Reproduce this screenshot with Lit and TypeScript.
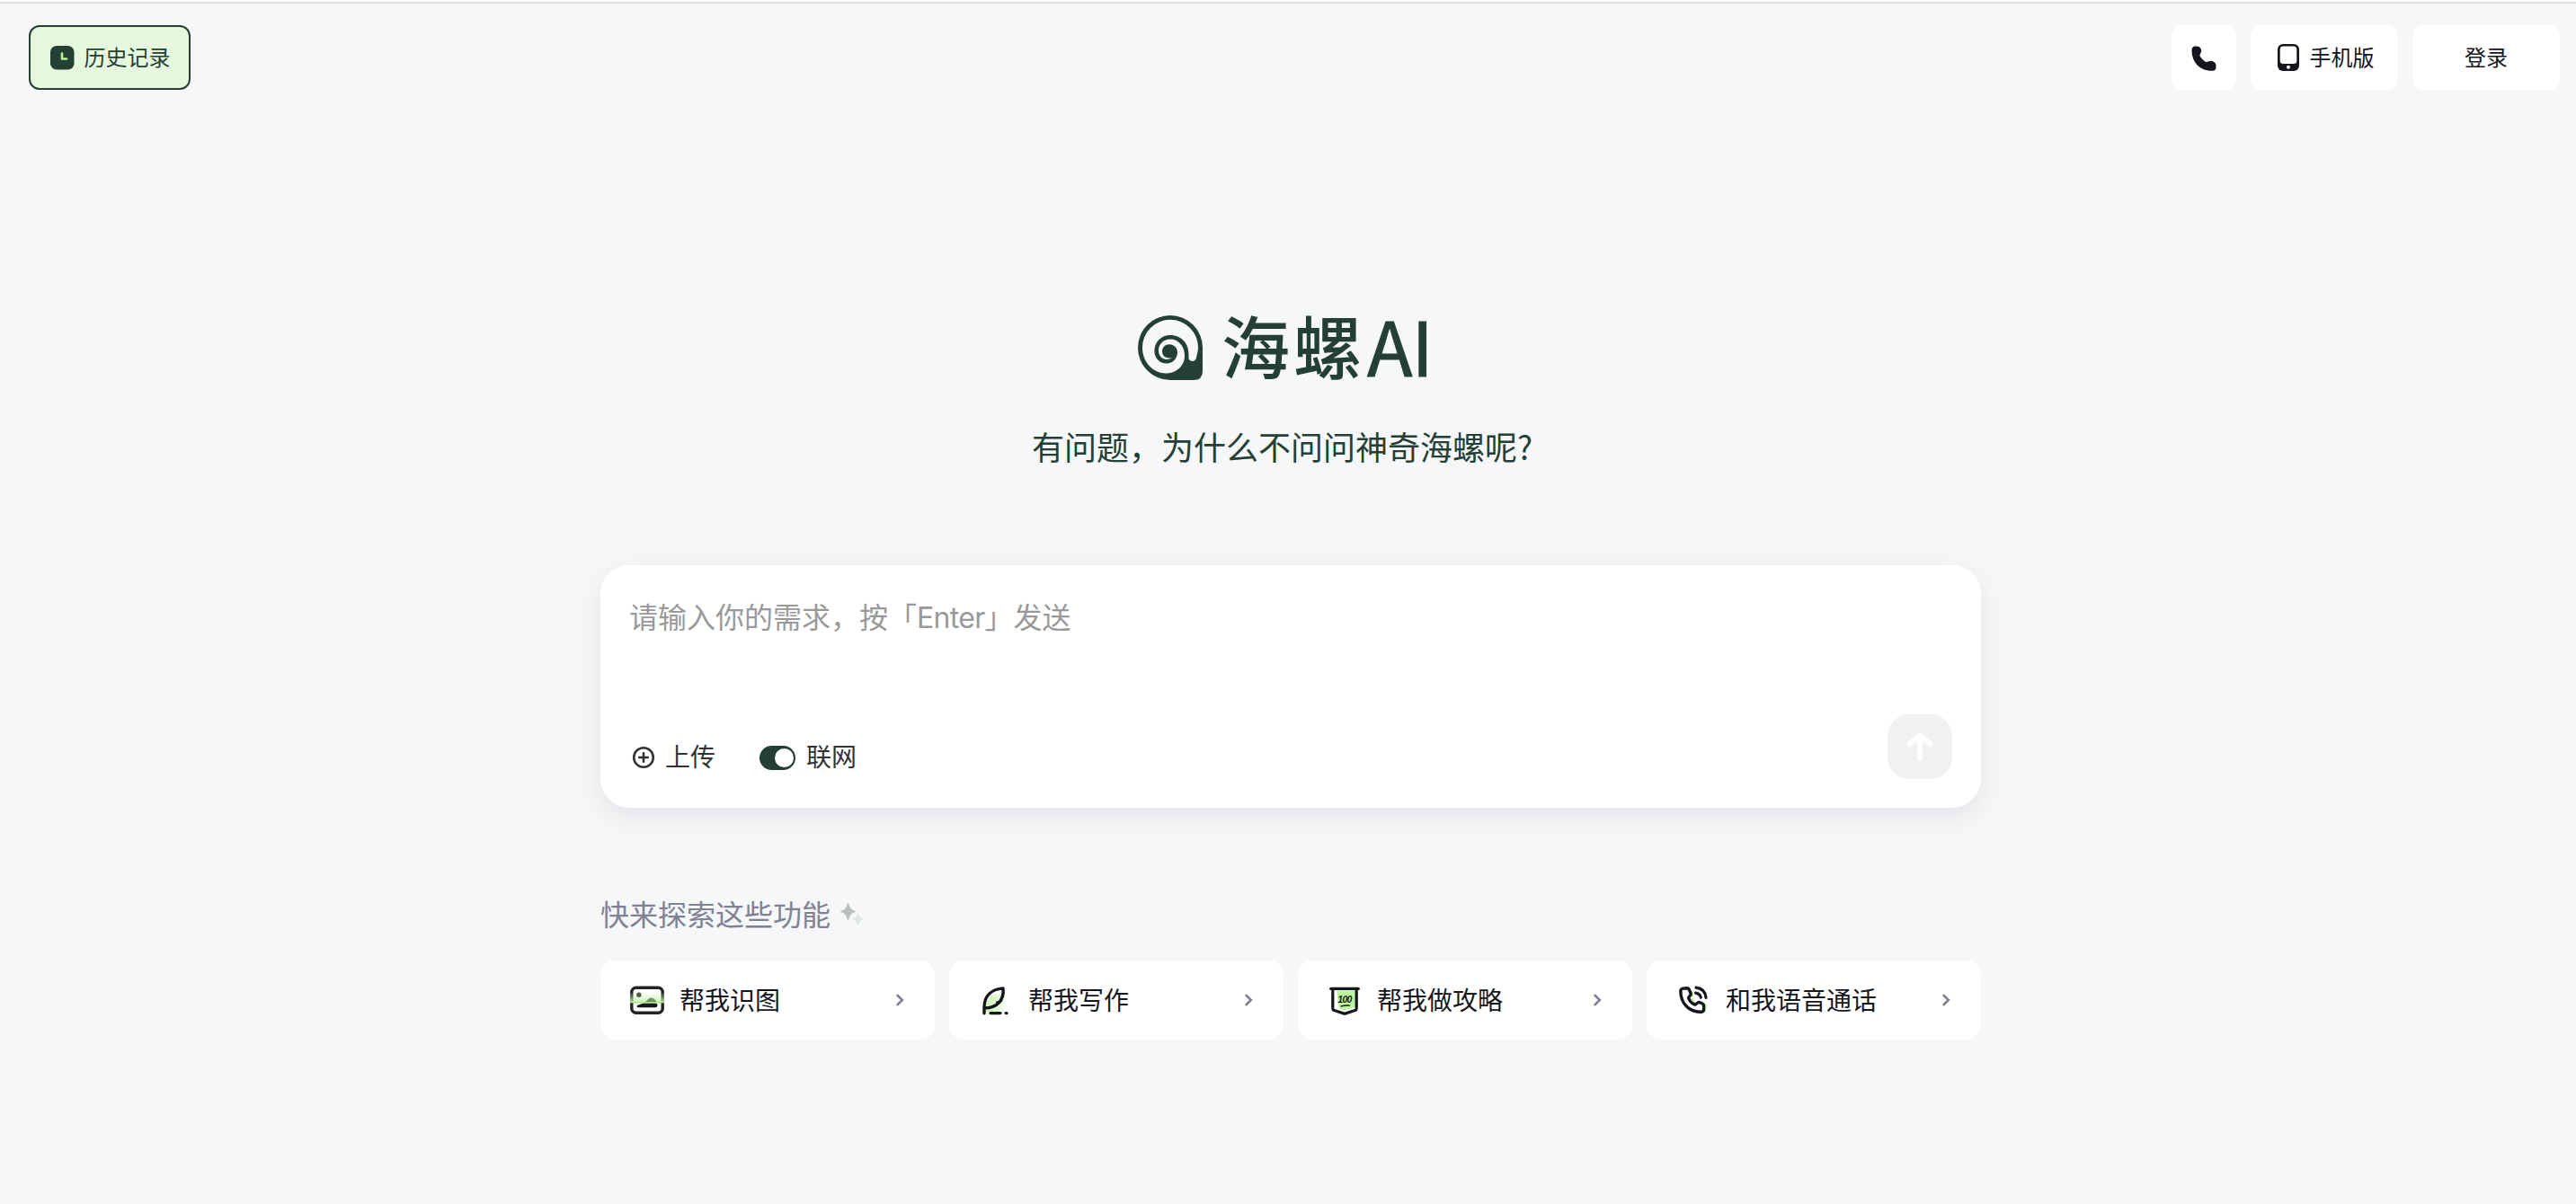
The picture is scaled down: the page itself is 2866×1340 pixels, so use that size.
import { LitElement, html, css, svg } from 'lit';
import { customElement, property } from 'lit/decorators.js';

const icons = {
  image: svg`
    <defs>
      <linearGradient id="scan" x1="0" y1="0" x2="0" y2="1">
        <stop offset="0" stop-color="#c4f4a4" stop-opacity="0"></stop>
        <stop offset="1" stop-color="#c4f4a4" stop-opacity="0.9"></stop>
      </linearGradient>
    </defs>
    <rect x="2.8" y="6.2" width="34.4" height="28" rx="5" fill="none" stroke="#222426" stroke-width="3.4"></rect>
    <rect x="1" y="11" width="38" height="12" fill="url(#scan)"></rect>
    <circle cx="10.8" cy="14.2" r="2.7" fill="#4c5f45"></circle>
    <path d="M17 23 C20 21 21.5 17.5 24.5 17.5 C27.5 17.5 30 21 31 23 Z" fill="#6f9160"></path>
    <path d="M10 28.2 C8 28.2 8 26.5 10 25.5 L16 23.5 H30 Q31.5 24 31.5 26 Q31.5 28.2 29 28.2 Z" fill="#14181c"></path>
    <rect x="1" y="22" width="38" height="1.4" fill="#a5e87b"></rect>
  `,
  write: svg`
    <defs>
      <linearGradient id="ray" x1="0" y1="0" x2="1" y2="0.4">
        <stop offset="0.3" stop-color="#b8f596"></stop>
        <stop offset="1" stop-color="#b8f596" stop-opacity="0"></stop>
      </linearGradient>
    </defs>
    <g transform="translate(1 1.4)">
      <path d="M14 14 L26 11 L35 32 H6 V24 Z" fill="url(#ray)"></path>
      <path d="M6 27 C6 13 15 6.5 27 5.5 C28.5 18 21 27.5 6 27.5 V33.4" fill="#fff" fill-opacity="0.35"
        stroke="#14161c" stroke-width="3.4" stroke-linejoin="round" stroke-linecap="round"></path>
      <path d="M20 20.5 L24.5 20.5 L20 24 Z" fill="#14161c" stroke="#14161c" stroke-width="1.5"></path>
      <path d="M13 33.2 H24 M30.2 33.2 H31" stroke="#14161c" stroke-width="3.4" stroke-linecap="round"></path>
    </g>
  `,
  guide: svg`
    <g transform="translate(2 1.4)">
      <path d="M9 8 H30 V26 L18 30 L12 28 Z" fill="#bdf59c"></path>
      <path d="M5 8 H9 L11 27.5 L5 26 Z" fill="#fff"></path>
      <path d="M4.8 7 V28 Q4.8 29.5 6.5 30.2 L18 33.8 L29.5 30.2 Q31.2 29.5 31.2 28 V7" fill="none"
        stroke="#14161c" stroke-width="3.2"></path>
      <path d="M2.8 6 H33.2" stroke="#14161c" stroke-width="3.4" stroke-linecap="round"></path>
      <path d="M13.5 25.6 Q19 24.2 24 24.8" fill="none" stroke="#14161c" stroke-width="1.3"></path>
      <text x="18.3" y="21.6" text-anchor="middle" font-family="Liberation Sans" font-weight="700"
        font-style="italic" font-size="10.5" textLength="16" fill="#14161c">100</text>
    </g>
  `,
  call: svg`
    <g transform="translate(2 0.8)">
      <path d="M14 9 L18 9 L18 15 L15 20 L20 25 L26 22 L33 24 L32 32 L24 33 Z" fill="#bdf59c"></path>
      <path d="M6.6 6.3 L11 6 Q12.5 6 13.2 7.4 L15 11.4 Q15.5 12.6 14.7 13.8 L12.6 16.6 C13.6 19.8 16.8 23.2 20 24.4
        L23 22.2 Q24.2 21.4 25.5 22 L28.4 23.5 Q29.6 24.2 29.6 25.6 V29.4 Q29.6 32.2 26.8 32.4 C13.5 33 3.9 23 3.8 9.5 Q3.8 6.6 6.6 6.3 Z"
        fill="#fff" stroke="#14161c" stroke-width="3.4" stroke-linejoin="round"></path>
      <path d="M20.6 11.4 Q25.3 12 26.3 16.4 M21 5.4 Q31 6.4 32 16.6" fill="none" stroke="#14161c" stroke-width="3.2"
        stroke-linecap="round"></path>
    </g>
  `,
};

@customElement('feature-card')
export class FeatureCard extends LitElement {
  @property() icon: keyof typeof icons = 'image';
  @property() label = '';

  static styles = css`
    :host {
      display: flex;
      align-items: center;
      height: 88px;
      box-sizing: border-box;
      padding: 0 31px 0 32px;
      border-radius: 16px;
      background: #fff;
      color: #14161c;
      font-size: 28px;
    }
    .icon {
      width: 40px;
      height: 40px;
      margin-right: 16px;
      overflow: visible;
    }
    .label {
      flex: 1;
      padding-bottom: 3px;
      line-height: 40px;
    }
    .arrow {
      width: 16px;
      height: 16px;
    }
  `;

  render() {
    return html`
      <svg class="icon" viewBox="0 0 40 40">${icons[this.icon]}</svg>
      <span class="label">${this.label}</span>
      <svg class="arrow" viewBox="0 0 16 16">
        <path d="M5.5 2.8 L10.8 8 L5.5 13.2" fill="none" stroke="#808192" stroke-width="2.6" stroke-linecap="round"></path>
      </svg>
    `;
  }
}

@customElement('app-root')
export class AppRoot extends LitElement {
  private features = [
    { icon: 'image', label: '帮我识图' },
    { icon: 'write', label: '帮我写作' },
    { icon: 'guide', label: '帮我做攻略' },
    { icon: 'call', label: '和我语音通话' },
  ];

  static styles = css`
    :host {
      display: flex;
      flex-direction: column;
      height: 100vh;
      box-sizing: border-box;
      overflow: hidden;
      border-top: 2px solid #fbfcfc;
      background: #f5f7f9;
      color: #14161c;
      font-family: 'Noto Sans CJK SC', sans-serif;
    }
    .header {
      display: flex;
      gap: 16px;
      padding: 24px 18px 0 32px;
      border-top: 2px solid #dfe2e0;
      font-size: 24px;
    }
    .btn {
      display: flex;
      align-items: center;
      justify-content: center;
      width: 164px;
      height: 72px;
      box-sizing: border-box;
      border-radius: 12px;
      background: #fff;
    }
    .btn svg {
      flex: none;
    }
    .btn span {
      padding-bottom: 3px;
    }
    .history {
      width: 180px;
      gap: 11px;
      margin-right: auto;
      border: 2px solid #244034;
      background: #e5f8de;
      color: #244034;
    }
    .phone {
      width: 72px;
    }
    .mobile {
      gap: 12px;
      padding-left: 3px;
    }
    .main {
      display: flex;
      flex-direction: column;
      width: 1536px;
      margin: 0 auto;
      padding-left: 6px;
    }
    .brand {
      display: flex;
      align-items: center;
      height: 72px;
      margin: 251px 0 0 598px;
      color: #244034;
    }
    .shell {
      width: 72px;
      height: 72px;
      margin-right: 21px;
    }
    .name {
      padding-bottom: 9px;
      font-size: 76px;
      font-weight: 500;
      line-height: 72px;
      letter-spacing: 4px;
    }
    .ai {
      margin-left: 2px;
      padding-bottom: 9px;
      font-size: 83px;
      font-weight: 400;
      line-height: 72px;
      letter-spacing: -1px;
      -webkit-text-stroke: 1px #244034;
    }
    .tagline {
      margin: 46px 0 0 480px;
      color: #244034;
      font-size: 36px;
      line-height: 54px;
    }
    .composer {
      display: flex;
      flex-direction: column;
      justify-content: space-between;
      height: 270px;
      margin-top: 106px;
      box-sizing: border-box;
      padding: 32px 32px 32px;
      border-radius: 32px;
      background: #fff;
      box-shadow: 0 10px 32px rgba(25, 10, 20, 0.08);
    }
    .placeholder {
      color: #999;
      font-size: 32px;
      line-height: 48px;
    }
    .latin {
      font-family: Inter, sans-serif;
      letter-spacing: -0.7px;
    }
    .tools {
      display: flex;
      align-items: flex-end;
      color: #333;
      font-size: 28px;
      line-height: 45px;
    }
    .tool {
      display: flex;
      align-items: center;
      height: 48px;
    }
    .tool span {
      padding-bottom: 3px;
    }
    .plus {
      margin: 0 11px 0 3px;
    }
    .toggle {
      display: flex;
      justify-content: flex-end;
      width: 40px;
      height: 27px;
      margin: 0 12px 0 49px;
      box-sizing: border-box;
      padding: 3px 2px;
      border-radius: 14px;
      background: #244034;
    }
    .knob {
      width: 21px;
      height: 21px;
      border-radius: 50%;
      background: #fff;
    }
    .send {
      width: 72px;
      height: 72px;
      margin-left: auto;
      border-radius: 24px;
      background: #f1f1f1;
    }
    .explore {
      display: flex;
      align-items: center;
      gap: 8px;
      margin-top: 94px;
      color: #808192;
      font-size: 32px;
      line-height: 46px;
    }
    .explore span {
      padding-bottom: 2px;
    }
    .cards {
      display: grid;
      grid-template-columns: repeat(4, 1fr);
      gap: 16px;
      margin-top: 28px;
    }
    .edge {
      width: 2600px;
      margin: auto auto 0;
      box-shadow: 0 0 28px 12px rgba(0, 0, 0, 0.012);
    }
  `;

  render() {
    return html`
      <header class="header">
        <div class="btn history">
          <svg width="28" height="28" viewBox="0 0 28 28">
            <rect x="1" y="1" width="26.5" height="26.5" rx="7" fill="#244034"></rect>
            <path d="M14 9.5 V15.5 H19" fill="none" stroke="#b8f596" stroke-width="2.6" stroke-linecap="round" stroke-linejoin="round"></path>
          </svg>
          <span>历史记录</span>
        </div>
        <div class="btn phone">
          <svg width="28" height="32" viewBox="0 -3 28 32">
            <path d="M3.5 0.5 H6.5 Q9.5 0.5 10.7 3.2 Q12 6 10.3 8.3 Q9 10.3 9.6 11.5 Q12 15.5 16 18 Q17 18.4 19.5 17.3
              Q22 16 24.5 17.4 Q27.5 19 27.5 21.5 V24 Q27.3 27.5 24 27.8 C9.5 28.5 0.5 18 0.5 5 Q0.5 1 3.5 0.5 Z" fill="#14161c"></path>
          </svg>
        </div>
        <div class="btn mobile">
          <svg width="24" height="30" viewBox="0 0 24 30">
            <rect width="24" height="30" rx="6" fill="#14161c"></rect>
            <rect x="2.7" y="2.5" width="18.6" height="19.5" rx="3.5" fill="#fff"></rect>
            <circle cx="12" cy="25.8" r="2" fill="#fff"></circle>
          </svg>
          <span>手机版</span>
        </div>
        <div class="btn"><span>登录</span></div>
      </header>

      <main class="main">
        <div class="brand">
          <svg class="shell" viewBox="0 0 72 72">
            <path fill="#244034" fill-rule="evenodd" d="M36 0 A36 36 0 0 1 72 36 V62 Q72 72 62 72 H36 A36 36 0 0 1 36 0 Z
              M36 4.8 A31 31 0 0 0 5 36 C5 52 17 64.5 31 64.5 C43 64.5 52 56 52 45 C52 34 45 26.5 36 26.5
              C28.5 26.5 23 32 23 39 C23 45 27 49 32 49 C34.5 49 36.5 48.2 38 47 C36 48 27 48 27 40
              C27 35.5 30.5 32.2 35 32.2 C40 32.2 44 36 44 41 C44 48 38.5 53.5 32 53.5 C24 53.5 18.4 47.5 18.4 39.5
              C18.4 29.5 26 22 36 22 C48 22 56.5 31 56.5 43 V47 C56.5 52.3 64.5 52.3 65 47 C65.8 43 67 40 67 36 A31 31 0 0 0 36 4.8 Z"></path>
          </svg>
          <span class="name">海螺</span><span class="ai">AI</span>
        </div>
        <div class="tagline">有问题，为什么不问问神奇海螺呢?</div>

        <section class="composer">
          <div class="placeholder">请输入你的需求，按「<span class="latin">Enter</span>」发送</div>
          <div class="tools">
            <div class="tool">
              <svg class="plus" width="26" height="26" viewBox="0 0 26 26" fill="none" stroke="#333" stroke-width="2.6" stroke-linecap="round">
                <circle cx="13" cy="13" r="10.8"></circle>
                <path d="M13 8.2 V17.8 M8.2 13 H17.8"></path>
              </svg>
              <span>上传</span>
            </div>
            <div class="tool">
              <div class="toggle"><div class="knob"></div></div>
              <span>联网</span>
            </div>
            <svg class="send" viewBox="0 0 72 72" fill="none" stroke="#fff" stroke-width="6" stroke-linecap="round" stroke-linejoin="round">
              <path d="M36 49 V23.5 M25 32.5 L36 23.2 L47 32.5"></path>
            </svg>
          </div>
        </section>

        <div class="explore">
          <span>快来探索这些功能</span>
          <svg width="32" height="32" viewBox="0 0 32 32">
            <path d="M11.5 4 Q13 12 19.5 13.5 Q13 15 11.5 23 Q10 15 3.5 13.5 Q10 12 11.5 4 Z" fill="#b7c0bd" stroke="#b7c0bd"></path>
            <path d="M22.5 16 Q23.5 21 28 22 Q23.5 23 22.5 28.5 Q21.5 23 17 22 Q21.5 21 22.5 16 Z" fill="#e1e5e4" stroke="#e1e5e4"></path>
          </svg>
        </div>
        <div class="cards">
          ${this.features.map(
            (f) => html`<feature-card .icon=${f.icon} .label=${f.label}></feature-card>`
          )}
        </div>
      </main>
      <div class="edge"></div>
    `;
  }
}
